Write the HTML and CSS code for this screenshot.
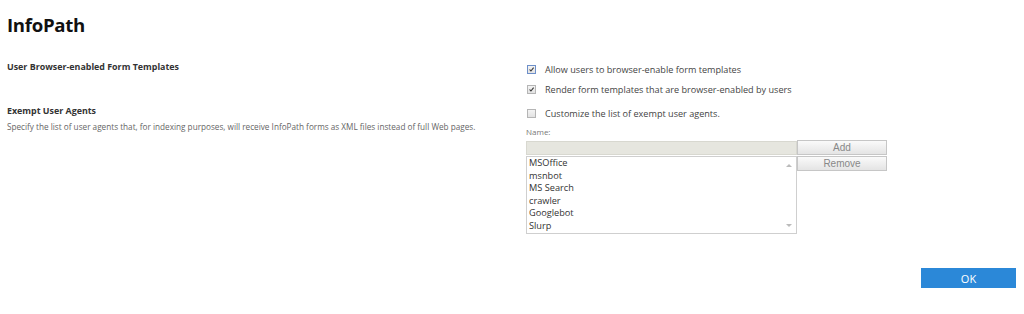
FILE: index.html
```html
<!DOCTYPE html>
<html lang="en">
<head>
    <meta charset="UTF-8">
    <title>InfoPath</title>
    <link rel="stylesheet" href="styles.css">
</head>
<body>
    <div class="page">
        <h1 class="title">InfoPath</h1>

        <div class="section first">
            <div class="info">
                <div class="heading">User Browser-enabled Form Templates</div>
            </div>
            <div class="fields">
                <label class="check-row">
                    <span class="box checked focused"><svg viewBox="0 0 9 9" width="9" height="9"><path d="M2 4.5 L3.8 6.4 L7.2 2.2" fill="none" stroke="#333" stroke-width="1.4"/></svg></span>
                    Allow users to browser-enable form templates
                </label>
                <label class="check-row">
                    <span class="box checked"><svg viewBox="0 0 9 9" width="9" height="9"><path d="M2 4.5 L3.8 6.4 L7.2 2.2" fill="none" stroke="#333" stroke-width="1.4"/></svg></span>
                    Render form templates that are browser-enabled by users
                </label>
            </div>
        </div>

        <div class="section">
            <div class="info">
                <div class="heading">Exempt User Agents</div>
                <div class="desc">Specify the list of user agents that, for indexing purposes, will receive InfoPath forms as XML files instead of full Web pages.</div>
            </div>
            <div class="fields">
                <label class="check-row">
                    <span class="box"></span>
                    Customize the list of exempt user agents.
                </label>
                <div class="name-label">Name:</div>
                <div class="agent-editor">
                    <div class="name-input"></div>
                    <button class="btn">Add</button>
                    <div class="listbox">
                        <div class="items">
                            <div>MSOffice</div>
                            <div>msnbot</div>
                            <div>MS Search</div>
                            <div>crawler</div>
                            <div>Googlebot</div>
                            <div>Slurp</div>
                        </div>
                        <div class="scroll">
                            <span class="arrow up"></span>
                            <span class="arrow down"></span>
                        </div>
                    </div>
                    <button class="btn">Remove</button>
                </div>
            </div>
        </div>

        <div class="actions">
            <button class="ok">OK</button>
        </div>
    </div>
</body>
</html>
```

FILE: styles.css
```css
* {
    margin: 0;
    padding: 0;
    box-sizing: border-box;
}

body {
    background: #fff;
    font-family: 'Open Sans', 'Segoe UI', sans-serif;
    color: #444;
}

.page {
    padding: 13px 8px 0 7px;
}

.title {
    font-size: 18.6px;
    line-height: 24px;
    font-weight: bold;
    color: #111;
    letter-spacing: -0.3px;
}

.section {
    display: grid;
    grid-template-columns: 519px 1fr;
}

.section.first {
    margin-top: 22px;
    margin-bottom: 4px;
}

.info {
    padding-top: 1px;
}

.heading {
    font-size: 8.9px;
    line-height: 14px;
    font-weight: bold;
    color: #333;
}

.section .info .desc {
    margin-top: 2px;
    font-size: 8.2px;
    line-height: 14px;
    color: #666;
}

.check-row {
    display: flex;
    align-items: center;
    height: 20px;
    font-size: 9.1px;
    color: #444;
}

.box {
    width: 9px;
    height: 9px;
    margin-right: 9px;
    margin-left: 1px;
    border: 1px solid #b5b5b5;
    background: linear-gradient(#f4f4f4, #e2e2e2);
    display: flex;
    align-items: center;
    justify-content: center;
}

.box svg {
    display: block;
}

.box.focused {
    border-color: #6d8fc9;
}

.name-label {
    margin-top: 3px;
    font-size: 8px;
    line-height: 12px;
    color: #777;
}

.agent-editor {
    margin-top: 2px;
    display: grid;
    grid-template-columns: 271px 90px;
    row-gap: 1px;
    align-items: start;
}

.name-input {
    height: 14px;
    margin-top: 1px;
    background: #e6e6df;
    border: 1px solid #d8d8d0;
}

.btn {
    height: 15px;
    font-family: 'Liberation Sans', Arial, sans-serif;
    font-size: 10px;
    color: #888;
    background: linear-gradient(#fafafa, #e4e4e4);
    border: 1px solid #c6c6c6;
}

.listbox {
    height: 78px;
    border: 1px solid #cfcfcf;
    display: flex;
}

.items {
    flex: 1;
    padding: 0 0 0 2px;
    font-size: 9.2px;
    line-height: 12.6px;
    color: #333;
}

.scroll {
    width: 14px;
    display: flex;
    flex-direction: column;
    justify-content: space-between;
    align-items: center;
    padding: 7px 0 6px;
}

.arrow {
    width: 0;
    height: 0;
    border-left: 3px solid transparent;
    border-right: 3px solid transparent;
}

.arrow.up {
    border-bottom: 3px solid #bbb;
}

.arrow.down {
    border-top: 3px solid #bbb;
}

.actions {
    display: flex;
    justify-content: flex-end;
    margin-top: 34px;
}

.ok {
    width: 95px;
    height: 20px;
    background: #2b88d8;
    color: #fff;
    border: none;
    font-family: 'Open Sans', 'Segoe UI', sans-serif;
    font-size: 11px;
}
```
